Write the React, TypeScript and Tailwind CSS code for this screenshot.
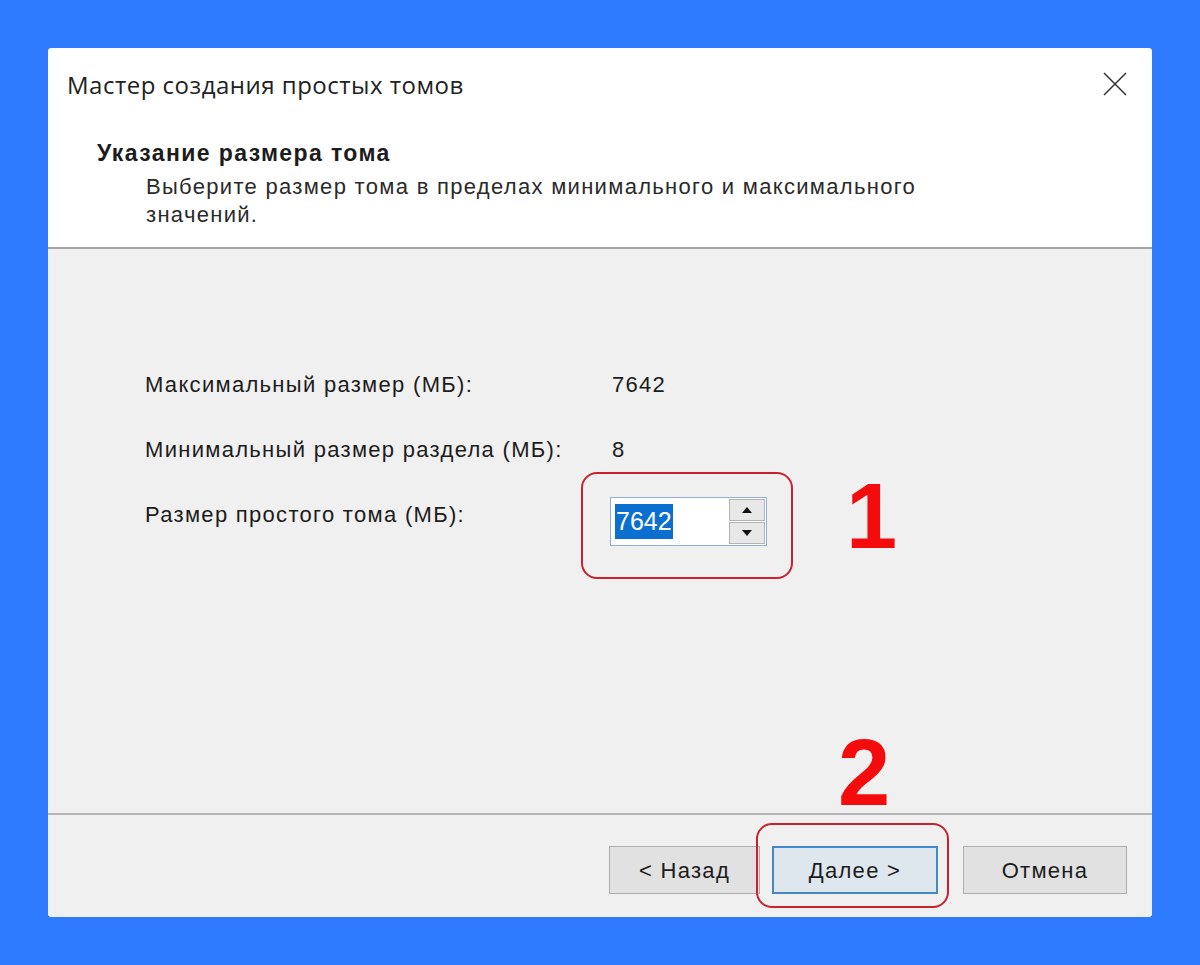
const rows = [
  { label: 'Максимальный размер (МБ):', value: '7642' },
  { label: 'Минимальный размер раздела (МБ):', value: '8' },
];

function SpinBox() {
  return (
    <div className="flex h-[49px] w-[157px] border border-[#8fb1d9] bg-white">
      <div className="flex flex-1 items-center pl-[4px]">
        <span className="bg-[#0b6fd0] px-[1px] text-[25px] leading-[35px] text-white">7642</span>
      </div>
      <div className="flex w-[38px] flex-col gap-[1px] p-[1px]">
        <button className="flex flex-1 items-center justify-center border border-[#b3b3b3] bg-[#e8e8e8]">
          <svg width="10" height="6" viewBox="0 0 10 6"><path d="M0 6 L5 0 L10 6 Z" fill="#111" /></svg>
        </button>
        <button className="flex flex-1 items-center justify-center border border-[#b3b3b3] bg-[#e8e8e8]">
          <svg width="10" height="6" viewBox="0 0 10 6"><path d="M0 0 L5 6 L10 0 Z" fill="#111" /></svg>
        </button>
      </div>
    </div>
  );
}

export default function App() {
  return (
    <div className="min-h-screen bg-[#2f7bff] p-12" style={{ fontFamily: '"Liberation Sans", Arial, sans-serif' }}>
      <div className="relative flex h-[869px] w-[1104px] flex-col overflow-hidden rounded-[4px] bg-white text-[#1c1c1c]">
        {/* header */}
        <div className="relative h-[201px] shrink-0 border-b-2 border-[#a3a3a3] bg-white pl-[19px] pt-[20px]">
          <div className="text-[24px] leading-[33px] tracking-[0.5px] text-[#222]" style={{ fontFamily: '"Open Sans", "Noto Sans", sans-serif' }}>
            Мастер создания простых томов
          </div>
          <button className="absolute right-[25px] top-[24px]">
            <svg width="24" height="24" viewBox="0 0 24 24">
              <path d="M1 1 L23 23 M23 1 L1 23" stroke="#333" strokeWidth="1.5" fill="none" />
            </svg>
          </button>
          <div className="mt-[38px] pl-[30px] text-[23px] font-bold leading-[28px] tracking-[1.4px]">Указание размера тома</div>
          <div className="mt-[6px] pl-[79px] text-[22px] leading-[28px] tracking-[1.3px] text-[#2a2a2a]">
            Выберите размер тома в пределах минимального и максимального
            <br />
            значений.
          </div>
        </div>

        {/* body */}
        <div className="flex h-[566px] shrink-0 flex-col gap-[25px] border-b-2 border-[#b4b4b4] bg-[#f0f0f0] pl-[97px] pt-[115px] text-[22px] tracking-[1.3px]">
          {rows.map((r) => (
            <div key={r.label} className="flex h-[40px] items-center">
              <span className="w-[467px]">{r.label}</span>
              <span>{r.value}</span>
            </div>
          ))}
          <div className="flex items-start">
            <span className="flex h-[40px] w-[465px] items-center">Размер простого тома (МБ):</span>
            <div className="mt-[3px] tracking-normal">
              <SpinBox />
            </div>
          </div>
        </div>

        {/* footer */}
        <div className="flex flex-1 items-start justify-end bg-[#f0f0f0] pr-[25px] pt-[31px] text-[22px] tracking-[1.3px]">
          <button className="h-[48px] w-[151px] border border-[#adadad] bg-[#e1e1e1]">&lt; Назад</button>
          <button className="ml-[12px] h-[48px] w-[166px] border-2 border-[#4588c6] bg-[#dfe7ee]">Далее &gt;</button>
          <button className="ml-[25px] h-[48px] w-[164px] border border-[#adadad] bg-[#e1e1e1]">Отмена</button>
        </div>

        {/* annotations */}
        <div className="pointer-events-none absolute left-[533px] top-[424px] h-[107px] w-[212px] rounded-[16px] border-2 border-[#c8222e]" />
        <div className="pointer-events-none absolute left-[798px] top-[418px] text-[92px] font-bold leading-[100px] text-[#f40b0b]">1</div>
        <div className="pointer-events-none absolute left-[790px] top-[675px] text-[94px] font-bold leading-[100px] text-[#f40b0b]">2</div>
        <div className="pointer-events-none absolute left-[708px] top-[775px] h-[85px] w-[193px] rounded-[16px] border-2 border-[#c8222e]" />
      </div>
    </div>
  );
}
